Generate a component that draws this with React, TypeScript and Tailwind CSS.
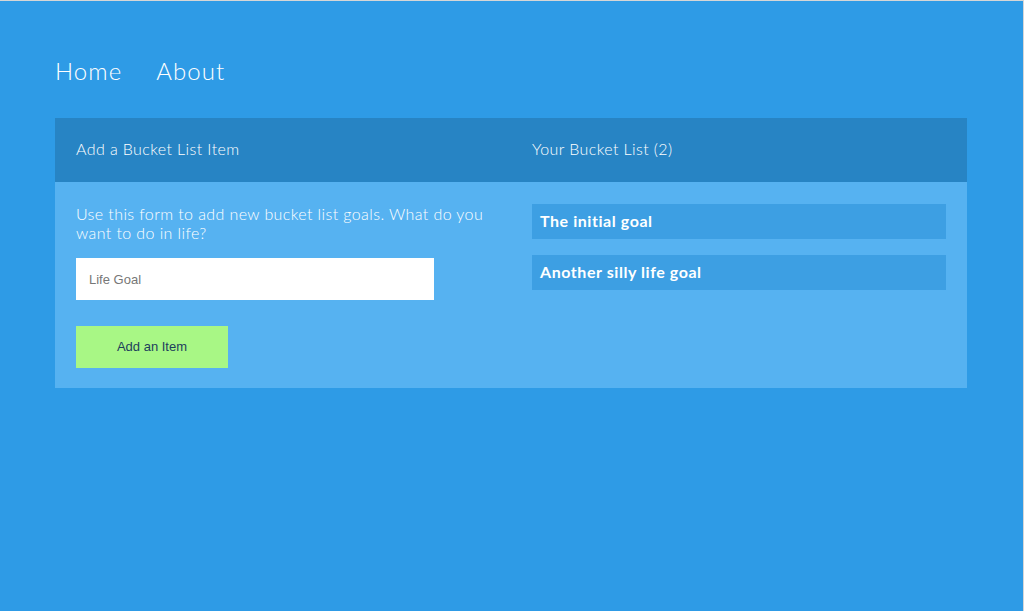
const items = ['The initial goal', 'Another silly life goal'];

export default function App() {
  return (
    <div
      className="min-h-[611px] w-full border-t border-r border-[#d6d6d6] bg-[#2e9be6] text-white"
      style={{ fontFamily: 'Lato, "Open Sans", sans-serif' }}
    >
      <div className="px-[55px] pt-[55px]">
        {/* Nav */}
        <nav className="flex items-center gap-[34px] text-[24px] font-light leading-[30px] tracking-[0.045em]">
          <a className="text-white">Home</a>
          <a className="text-white">About</a>
        </nav>

        {/* Panel */}
        <div className="mt-[32px] w-[912px] bg-[#56b2f1]">
          <div className="grid grid-cols-2 h-[64px] bg-[#2784c4] text-[16px] font-light tracking-[0.025em] pb-[2px]">
            <div className="flex items-center px-[21px]">Add a Bucket List Item</div>
            <div className="flex items-center px-[21px]">Your Bucket List (2)</div>
          </div>

          <div className="grid grid-cols-2 pb-[20px]">
            {/* Form */}
            <div className="px-[21px] pt-[22px]">
              <p className="text-[16px] leading-[19px] font-light tracking-[0.025em]">
                Use this form to add new bucket list goals. What do you want to do in life?
              </p>
              <input
                placeholder="Life Goal"
                className="mt-[16px] block h-[42px] w-[358px] bg-white px-[13px] text-[13px] text-[#333] placeholder:text-[#777] outline-none"
                style={{ fontFamily: '"Liberation Sans", Arial, sans-serif' }}
              />
              <button
                className="mt-[26px] block h-[42px] w-[152px] bg-[#a8f785] text-[13px] text-[#1d3f5c]"
                style={{ fontFamily: '"Liberation Sans", Arial, sans-serif' }}
              >
                Add an Item
              </button>
            </div>

            {/* List */}
            <div className="px-[21px] pt-[22px] flex flex-col gap-[16px]">
              {items.map((item) => (
                <div
                  key={item}
                  className="flex h-[35px] items-center bg-[#3d9fe3] px-[8px] pb-[1px] text-[16px] font-bold tracking-[0.035em]"
                >
                  {item}
                </div>
              ))}
            </div>
          </div>
        </div>
      </div>
    </div>
  );
}
